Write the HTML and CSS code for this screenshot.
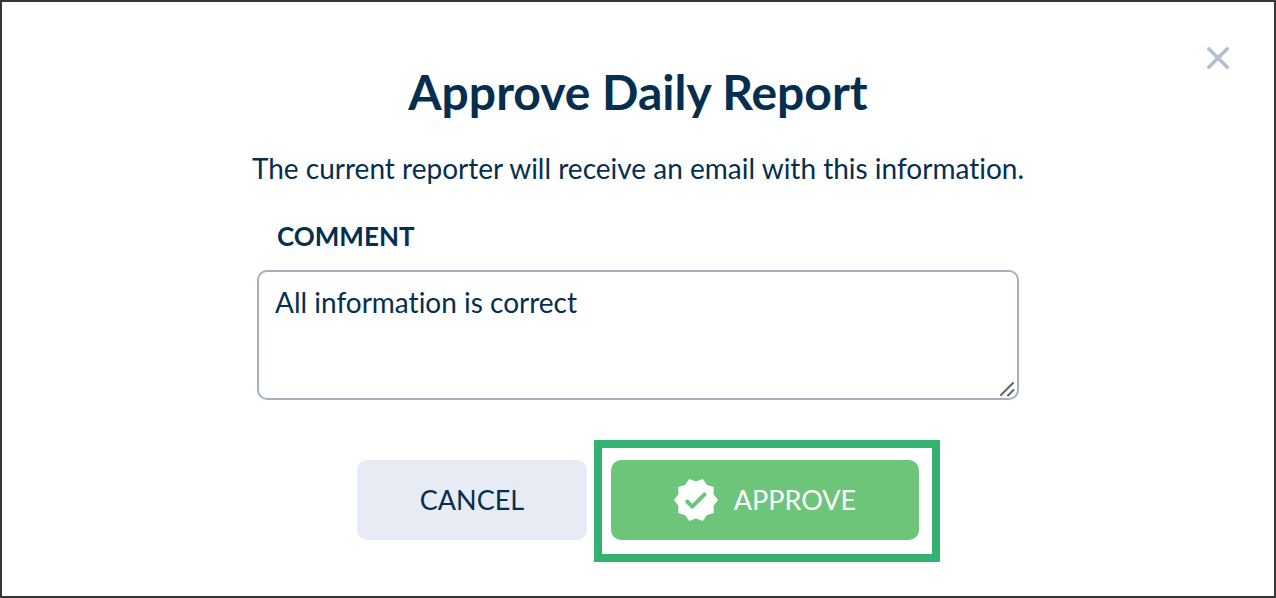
FILE: index.html
```
<!DOCTYPE html>
<html lang="en">
  <head>
    <meta charset="UTF-8" />
    <meta name="viewport" content="width=device-width, initial-scale=1.0" />
    <title>Approve Daily Report</title>
    <link rel="stylesheet" href="styles.css">
  </head>
  <body>
    <div class="modal" role="dialog" aria-labelledby="modal-title">
      <button type="button" class="close-button" aria-label="Close">
        <svg width="24" height="24" viewBox="0 0 24 24">
          <path d="M2.7 2.7 L21.3 21.3 M21.3 2.7 L2.7 21.3" />
        </svg>
      </button>

      <form class="modal-content">
        <h1 id="modal-title">Approve Daily Report</h1>
        <p class="description">The current reporter will receive an email with this information.</p>

        <label for="comment">COMMENT</label>
        <div class="comment-box">
          <textarea id="comment">All information is correct</textarea>
          <svg class="grip" width="16" height="16" viewBox="0 0 16 16">
            <path d="M2 13 L14 1 M9 13.5 L14.5 8" />
          </svg>
        </div>

        <div class="actions">
          <button type="button" class="button cancel-button">CANCEL</button>
          <div class="highlight">
            <button type="button" class="button approve-button">
              <svg width="44" height="44" viewBox="0 0 44 44">
                <path class="badge" d="M44 22 L39.6 27.7 L39.8 34.9 L32.9 37 L28.8 42.9 L22 40.5 L15.2 42.9 L11.1 37 L4.2 34.9 L4.4 27.7 L0 22 L4.4 16.3 L4.2 9.1 L11.1 7 L15.2 1.1 L22 3.5 L28.8 1.1 L32.9 7 L39.8 9.1 L39.6 16.3 Z" />
                <path class="check" d="M13.2 23.5 L18.3 28.6 L30.5 16.4" />
              </svg>
              APPROVE
            </button>
          </div>
        </div>
      </form>
    </div>
  </body>
</html>
```
FILE: styles.css
```
* {
  box-sizing: border-box;
}

body {
  margin: 0;
  font-family: Lato, "Liberation Sans", sans-serif;
  font-variant-ligatures: none;
  color: #062f4f;
  background: #fff;
}

.modal {
  position: relative;
  min-height: 100vh;
  padding: 62px 20px 32px;
  border: 2px solid #363636;
}

.close-button {
  position: absolute;
  top: 44px;
  right: 44px;
  padding: 0;
  border: none;
  background: none;
  cursor: pointer;
}

.close-button svg {
  display: block;
  fill: none;
  stroke: #b2becd;
  stroke-width: 3.4;
  stroke-linecap: round;
}

.modal-content {
  max-width: 762px;
  margin: 0 auto;
}

h1 {
  margin: 0;
  font-size: 48px;
  line-height: 56px;
  font-weight: bold;
  text-align: center;
}

.description {
  margin: 30px -10px 32px;
  font-size: 28px;
  line-height: 36px;
  text-align: center;
}

label {
  display: block;
  margin: 0 20px 16px;
  font-size: 26px;
  line-height: 36px;
  font-weight: bold;
}

.comment-box {
  position: relative;
}

textarea {
  display: block;
  width: 100%;
  height: 130px;
  padding: 12px 16px;
  border: 2px solid #a4b1c1;
  border-radius: 10px;
  outline: none;
  resize: none;
  font-family: inherit;
  font-variant-ligatures: inherit;
  font-size: 28px;
  line-height: 36px;
  color: inherit;
  background: #fff;
}

.grip {
  position: absolute;
  right: 4px;
  bottom: 2px;
  fill: none;
  stroke: #646464;
  stroke-width: 2;
  stroke-linecap: round;
}

.actions {
  display: flex;
  justify-content: center;
  gap: 24px;
  margin-top: 60px;
}

.button {
  display: flex;
  align-items: center;
  justify-content: center;
  gap: 16px;
  height: 80px;
  padding: 0;
  border: none;
  border-radius: 10px;
  font-family: inherit;
  font-size: 27px;
  line-height: 36px;
  cursor: pointer;
}

.cancel-button {
  width: 230px;
  color: #062f4f;
  background: #e7ecf4;
}

.approve-button {
  width: 308px;
  color: #fff;
  background: #6dc579;
}

.badge {
  fill: #fff;
}

.check {
  fill: none;
  stroke: #6dc579;
  stroke-width: 4;
  stroke-linecap: round;
  stroke-linejoin: round;
}

.highlight {
  position: relative;
}

/* Green frame around the approve button */
.highlight::after {
  content: "";
  position: absolute;
  inset: -20px -21px -22px -17px;
  border: 8px solid #35b271;
  pointer-events: none;
}
```
